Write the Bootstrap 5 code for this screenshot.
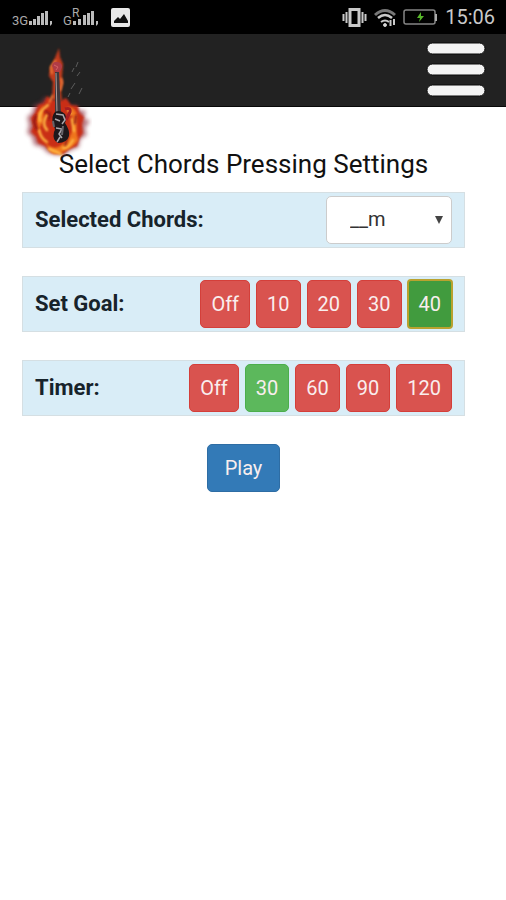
<!DOCTYPE html>
<html lang="en">
<head>
<meta charset="utf-8">
<meta name="viewport" content="width=device-width, initial-scale=1">
<title>Select Chords Pressing Settings</title>
<link href="https://cdn.jsdelivr.net/npm/bootstrap@5.3.0/dist/css/bootstrap.min.css" rel="stylesheet">
<style>
body { font-family: Roboto, "Liberation Sans", sans-serif; color: #1b1b1b; font-size: 20px; background: #fff; }
.status-bar { height: 34px; background: #000; color: #c9c9c9; padding: 0 11px 0 12px; }
.status-bar svg, .brand-link svg, .menu-btn svg { display: block; }
.clock { font-size: 20px; line-height: 36px; margin-left: 5px; }
.app-nav { height: 73px; background: #222; border-bottom: 1px solid #080808; padding: 0 18px; }
.brand-link { left: 22px; top: 8px; z-index: 1; }
.menu-btn { background: none; border: 0; padding: 0; }
.settings { padding: 43px 41px 0 22px; }
.settings h1 { font-size: 26px; line-height: 28px; font-weight: 400; margin: 0 0 14px; color: #111; }
.setting { min-height: 56px; background: #d9edf7; border: 1px solid #d5dfe3; padding: 3px 12px; margin-bottom: 28px; }
.setting-name { font-size: 22px; line-height: 28px; font-weight: 700; color: #17232b; }
.choices { gap: 6px; }
.choice, .play { --bs-btn-font-size: 20px; --bs-btn-line-height: 28px; --bs-btn-padding-y: 9px; --bs-btn-padding-x: 10px; --bs-btn-border-radius: 5px; --bs-btn-color: #f9eeee; --bs-btn-hover-color: #fff; height: 48px; }
.choice { --bs-btn-bg: #d9534f; --bs-btn-border-color: #d43f3a; --bs-btn-hover-bg: #c9302c; --bs-btn-hover-border-color: #ac2925; }
.chosen { --bs-btn-bg: #5cb85c; --bs-btn-border-color: #4cae4c; --bs-btn-hover-bg: #449d44; --bs-btn-hover-border-color: #398439; }
.chosen-focus { --bs-btn-bg: #419b3e; --bs-btn-border-color: #398439; --bs-btn-border-radius: 3px; outline: 2px solid #b9a22f; outline-offset: -1px; }
.play { --bs-btn-bg: #337ab7; --bs-btn-border-color: #2e6da4; --bs-btn-hover-bg: #286090; --bs-btn-hover-border-color: #204d74; --bs-btn-padding-x: 17px; }
.chord-picker { width: 126px; height: 48px; margin: 0; border: 1px solid #ccc; border-radius: 5px; font-size: 20px; line-height: 28px; padding: 8px 30px 10px 23px; color: #333;
  background: #fff url("data:image/svg+xml,%3Csvg xmlns='http://www.w3.org/2000/svg' viewBox='0 0 8 8'%3E%3Cpath d='M0 0h8L4 8z' fill='%23444'/%3E%3C/svg%3E") no-repeat right 8px center / 8px 8px; }
</style>
<script defer src="https://cdn.jsdelivr.net/npm/bootstrap@5.3.0/dist/js/bootstrap.bundle.min.js"></script>
</head>
<body>
<div class="status-bar d-flex align-items-center justify-content-between">
  <svg width="120" height="34" viewBox="0 0 120 34" fill="#bbb" aria-hidden="true">
    <g font-family="Roboto, sans-serif" fill="#aaa">
      <text x="0" y="25" font-size="13">3G</text>
      <text x="51" y="25" font-size="13">G</text>
      <text x="60" y="17" font-size="12">R</text>
    </g>
    <path d="M17 21h3v4h-3zM21 19h3v6h-3zM25 16h3v9h-3zM29 13h3v12h-3zM33 11h3v14h-3zM38 21h2v3l-2 2z"/>
    <path d="M61 21h3v4h-3zM66 19h3v6h-3zM71 15h3v10h-3zM75 13h3v12h-3zM79 11h3v14h-3zM84 21h2v3l-2 2z"/>
    <rect x="99" y="8" width="19" height="19" rx="2" fill="#e8e8e8"/>
    <path d="M102 23v-2l4-4 2 2 4-5 4 7v2z" fill="#111"/>
  </svg>
  <div class="d-flex align-items-center">
    <svg width="98" height="34" viewBox="0 0 98 34" fill="none" stroke="#c9c9c9" aria-hidden="true">
      <path d="M8 9.500h9v16H8z" stroke-width="3"/>
      <path d="M4.500 12v11M20.500 12v11" stroke-width="2"/>
      <path d="M1.500 14v7M23.500 14v7" stroke-width="2"/>
      <path d="M33 15q10-9 20 0" stroke="#777" stroke-width="3"/>
      <path d="M36 18q7-6 14 0" stroke-width="2.500"/>
      <path d="M39 22q4-3 8 0" stroke-width="2"/>
      <circle cx="43" cy="25" r="1.500" fill="#ddd"/>
      <path d="M48.500 20v6M52 19v6" stroke-width="2"/>
      <rect x="62" y="10" width="31" height="14" rx="2" stroke="#858585" stroke-width="1.500"/>
      <path d="M94 14v7" stroke="#aaa" stroke-width="2"/>
      <path d="M79 12l-4 6h3l-1 4 5-6h-3z" fill="#57b62a" stroke="none"/>
    </svg>
    <span class="clock">15:06</span>
  </div>
</div>

<nav class="app-nav position-relative d-flex align-items-center justify-content-end" aria-label="Main">
  <a class="brand-link position-absolute" href="#" aria-label="Home">
    <svg width="70" height="118" viewBox="0 0 70 118" aria-hidden="true">
      <defs>
        <filter id="soft" x="-20%" y="-20%" width="140%" height="140%"><feGaussianBlur stdDeviation="2"/></filter>
        <filter id="glow" x="-20%" y="-20%" width="140%" height="140%"><feGaussianBlur stdDeviation=".8"/></filter>
      </defs>
      <path d="M30 58l-7-3-4 6-7 2-2 8-5 4 2 8-2 8 5 4 2 8 8 2 6 6 8 2 8 0 7-5 8-3 1-8 7-4-2-7 5-7-6-3 2-7-7-1-3-5-6 2-5-7-6 3z" fill="#98404b" opacity=".7" filter="url(#soft)"/>
      <path d="M30 58l-5-4-3 7-6 2-3 8-4 5 2 8-2 6 5 5 2 6 7 3 6 6 7 1 5 1 6-5 8-3 2-7 4-6-1-8 2-8-5-5-1-6-7-1-5-7-5 3z" fill="#c92d16" filter="url(#glow)"/>
      <path d="M22 63q-8 7-7 17t5 16 8 13 17-1 11-12-1-17-8-14q7 16 3 25t-12 14-16-5-3-16 1-15z" fill="#ef761f" filter="url(#glow)"/>
      <g fill="none" stroke="#ffb944" stroke-width="2.500" stroke-linecap="round" filter="url(#glow)">
        <path d="M26 63q-11 8-8 16M25 73q-6 9 0 15M17 88q2 9 8 12M27 107l8 3 4 2M41 106q6 0 10-8M52 89l-2-12M49 72l-3-5"/>
      </g>
      <path d="M30 58l1-18-4-6 1-8 4-8 5-12 1 9 3 7-1 13 1 5-2 9 1 10z" fill="#c03a1e" filter="url(#glow)"/>
      <path d="M30 32l-1-7 5-7M39 36l1 5-2 8M31 53l-4 8" fill="none" stroke="#f5803a" stroke-width="2" filter="url(#glow)"/>
      <path d="M14 73l-2 7 3 8M23 69l5 3-1 6M46 94l-3 10M54 73l-1 9" fill="none" stroke="#8c1913" stroke-width="2" filter="url(#glow)"/>
      <path d="M30 24q1-5 6-4 4 1 4 5l-2 5h-5z" fill="#b03c46"/>
      <path d="M32 23l4 2-2 3" fill="none" stroke="#d46064"/>
      <path d="M33 30h4l2 42h-6z" fill="#40383b"/>
      <path d="M34 31l1 41" stroke="#aa9d9b"/>
      <path d="M33 70q5-3 10 2 2 4 0 9 5 7 4 13-2 7-11 7-6-3-4-11 2-3-1-8-2-8 2-12z" fill="#1d181c"/>
      <path d="M43 67q6-2 5 3l-4 8" fill="none" stroke="#a71d22" stroke-width="3"/>
      <path d="M34 72l7 1 2 5-3 4M33 77l5 2M34 86l6 1-3 5 3 4M35 100l3-5" fill="none" stroke="#aaa7ad" stroke-width="1.500"/>
      <path d="M31 79l1 6M41 84l-1 9" fill="none" stroke="#666269" stroke-width="2"/>
      <path d="M56 20l-2 5M52 26l-2 4M58 30l-3 4M53 41l-4 6M60 46l-3 6M48 51l-2 4" stroke="#5d5d5d"/>
    </svg>
  </a>
  <button class="menu-btn" type="button" aria-label="Open menu">
    <svg width="64" height="60" viewBox="0 0 64 60" fill="#f4f4f4" stroke="#090909" aria-hidden="true">
      <rect x="3" y="3" width="58" height="11" rx="5.500"/><rect x="3" y="24" width="58" height="11" rx="5.500"/><rect x="3" y="45" width="58" height="11" rx="5.500"/>
    </svg>
  </button>
</nav>

<main class="settings">
  <h1 class="text-center">Select Chords Pressing Settings</h1>
  <form>
    <div class="setting d-flex align-items-center justify-content-between">
      <label class="setting-name" for="chords">Selected Chords:</label>
      <select class="form-select chord-picker" id="chords"><option>__m</option></select>
    </div>
    <div class="setting d-flex align-items-center justify-content-between" role="group" aria-labelledby="goal">
      <span class="setting-name" id="goal">Set Goal:</span>
      <div class="choices d-flex">
        <button type="button" class="btn choice">Off</button>
        <button type="button" class="btn choice">10</button>
        <button type="button" class="btn choice">20</button>
        <button type="button" class="btn choice">30</button>
        <button type="button" class="btn choice chosen chosen-focus" aria-pressed="true">40</button>
      </div>
    </div>
    <div class="setting d-flex align-items-center justify-content-between" role="group" aria-labelledby="timer">
      <span class="setting-name" id="timer">Timer:</span>
      <div class="choices d-flex">
        <button type="button" class="btn choice">Off</button>
        <button type="button" class="btn choice chosen" aria-pressed="true">30</button>
        <button type="button" class="btn choice">60</button>
        <button type="button" class="btn choice">90</button>
        <button type="button" class="btn choice">120</button>
      </div>
    </div>
    <div class="text-center"><button type="button" class="btn play">Play</button></div>
  </form>
</main>
</body>
</html>
